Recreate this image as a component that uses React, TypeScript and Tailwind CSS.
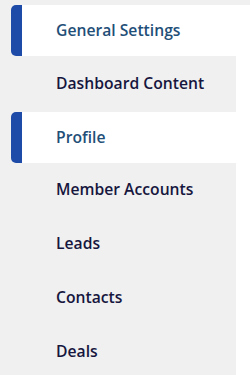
import { memo } from 'react'

const items = [
  { label: 'General Settings', active: true, h: 'h-[51px]' },
  { label: 'Dashboard Content', active: false, h: 'h-[56px]' },
  { label: 'Profile', active: true, h: 'h-[51px]' },
  { label: 'Member Accounts', active: false, h: 'h-[54px]' },
  { label: 'Leads', active: false, h: 'h-[54px]' },
  { label: 'Contacts', active: false, h: 'h-[54px]' },
  { label: 'Deals', active: false, h: 'h-[54px]' },
]

// SideMenu
const SideMenu = memo(() => {
  return (
    <nav className="w-[236px] bg-[#f0f0f0] pt-[5px] pl-[11px]">
      {items.map((item) =>
        item.active ? (
          <a
            key={item.label}
            href="#"
            className={`flex items-center ${item.h} w-[239px] bg-white rounded-l-[5px] border-l-[11px] border-[#1e4aa8] pl-[34px] text-[15.7px] font-semibold text-[#1f4f78]`}
          >
            {item.label}
          </a>
        ) : (
          <a
            key={item.label}
            href="#"
            className={`flex items-center ${item.h} pl-[45px] text-[15.7px] font-semibold text-[#16163e]`}
          >
            {item.label}
          </a>
        ),
      )}
    </nav>
  )
})

SideMenu.displayName = 'SideMenu'

export default function App() {
  return (
    <div
      className="w-[250px] h-[375px] overflow-hidden bg-white"
      style={{ fontFamily: '"Open Sans", "Noto Sans", sans-serif' }}
    >
      <div className="h-[5px] bg-[#f0f0f0] -mb-[5px]" />
      <SideMenu />
    </div>
  )
}
